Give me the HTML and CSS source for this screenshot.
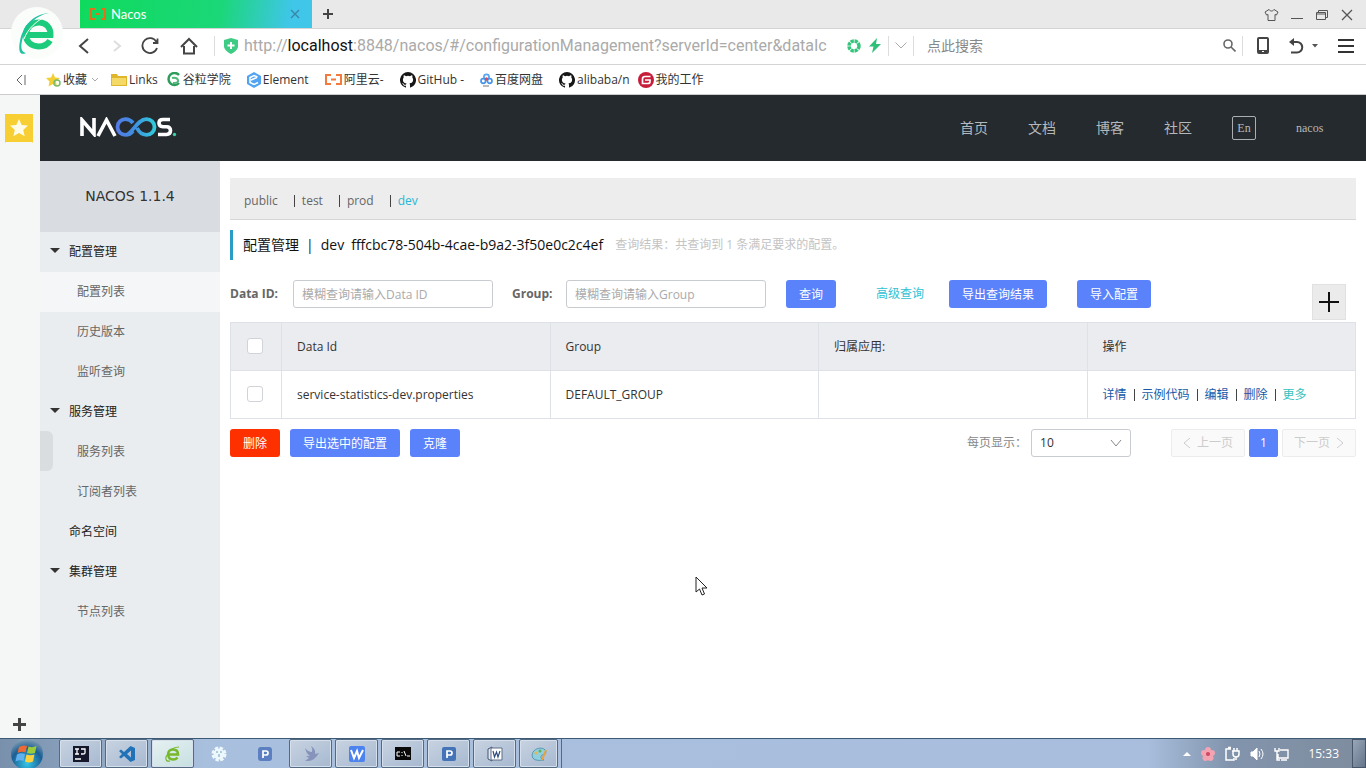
FILE: index.html
```html
<!DOCTYPE html>
<html lang="zh-CN">
<head>
<meta charset="utf-8">
<title>Nacos</title>
<link rel="stylesheet" href="styles.css">
</head>
<body>
<div class="tabbar">
  <div class="tab">
    <svg class="tab-icon" width="18" height="12" viewBox="0 0 18 12" fill="none" stroke="#e0701c" stroke-width="2"><path d="M6 1H2v10h4M12 1h4v10h-4M7 6h4"/></svg>
    <span class="tab-title">Nacos</span>
    <button class="plain" aria-label="关闭标签"><svg width="10" height="10" viewBox="0 0 10 10" stroke="#3a86a8" stroke-width="1.4"><path d="M1 1l8 8M9 1l-8 8"/></svg></button>
  </div>
  <button class="plain new-tab" aria-label="新标签"><svg width="12" height="12" viewBox="0 0 12 12" stroke="#444" stroke-width="2"><path d="M6 1v10M1 6h10"/></svg></button>
  <div class="window-tools">
    <svg width="15" height="14" viewBox="0 0 15 14" fill="none" stroke="#555"><path d="M5 1.500L1 4l1.500 3L4 6.500V12.500h7V6.500l1.500.5L14 4l-4-2.500C9 3.500 6 3.500 5 1.500z"/></svg>
    <svg width="13" height="14" viewBox="0 0 13 14" stroke="#555"><path d="M0 10.500h12"/></svg>
    <svg width="13" height="14" viewBox="0 0 13 14" fill="none" stroke="#555"><path d="M.5 4.500h9v7h-9zM.5 6h9M2.500 4.500v-2h9v7h-2"/></svg>
    <svg width="12" height="14" viewBox="0 0 12 14" stroke="#555" stroke-width="1.300"><path d="M1 2l10 10M11 2L1 12"/></svg>
  </div>
</div>
<div class="addressbar">
  <svg class="browser-logo" width="56" height="60" viewBox="0 0 56 60">
    <circle cx="27" cy="31" r="26" fill="#fbfdfb"/>
    <path d="M17 33H40.500C41 26 36 20.500 29.500 20.500C21 20.500 16 26 16 33C16 39.500 21 44.500 28.500 44.500C34 44.500 38 42 40 38.500" fill="none" stroke="#1ccb7c" stroke-width="6"/>
    <path d="M39 11C27 13 16 23 13 35C10 45 11 50 16 51C10 54 8 49 10 39C13 24 23 12 39 11z" fill="#20c0a0"/>
    <path d="M36 14C27 19 18 26 14 37" stroke="#fff" fill="none"/>
  </svg>
  <div class="nav-tools">
    <svg width="12" height="18" viewBox="0 0 12 18" fill="none" stroke="#444" stroke-width="2"><path d="M10 2L2 9l8 7"/></svg>
    <svg width="12" height="18" viewBox="0 0 12 18" fill="none" stroke="#ddd" stroke-width="2"><path d="M3 4l6 5-6 5"/></svg>
    <svg width="18" height="18" viewBox="0 0 18 18" fill="none" stroke="#444" stroke-width="1.800"><path d="M15.500 5A7.500 7.500 0 1 0 16 11M16.500 1.500V6H12"/></svg>
    <svg width="18" height="18" viewBox="0 0 18 18" fill="none" stroke="#444" stroke-width="2"><path d="M1 10l8-8 8 8M4 9v7.500h10V9"/></svg>
  </div>
  <i class="rule"></i>
  <svg class="shield" width="14" height="16" viewBox="0 0 14 16"><path d="M0 2L7 0l7 2v7q-1 4-7 7Q1 13 0 9z" fill="#3ecb84"/><path d="M7 4v7M3.500 7.500h7" stroke="#fff" stroke-width="2"/></svg>
  <div class="url">http://<b>localhost</b>:8848/nacos/#/configurationManagement?serverId=center&amp;dataIc</div>
  <svg class="aperture" width="14" height="14" viewBox="0 0 14 14" fill="none" stroke="#36c47c"><circle cx="7" cy="7" r="5" stroke-width="3.500" stroke-dasharray="3.200 .72"/></svg>
  <svg class="bolt" width="12" height="15" viewBox="0 0 12 15"><path d="M8 0L0 8.500h4.500L3 15l9-9H7z" fill="#2fbf78"/></svg>
  <i class="rule"></i>
  <svg class="drop" width="12" height="7" viewBox="0 0 12 7" fill="none" stroke="#aaa"><path d="M.5.500L6 6l5.500-5.500"/></svg>
  <i class="rule"></i>
  <input class="search" type="text" placeholder="点此搜索" aria-label="点此搜索">
  <svg width="13" height="13" viewBox="0 0 13 13" fill="none" stroke="#666" stroke-width="1.600"><circle cx="5" cy="5" r="4"/><path d="M8 8l4.500 4.500"/></svg>
  <i class="rule rule-search"></i>
  <div class="right-tools">
    <svg width="12" height="17" viewBox="0 0 12 17"><rect x="1" y="1" width="10" height="15" rx="1" fill="none" stroke="#444" stroke-width="2"/><path d="M1 13h10v3H1z" fill="#444"/><path d="M5 14.500h2" stroke="#fff"/></svg>
    <svg width="15" height="16" viewBox="0 0 15 16"><path d="M3 4h5a5 5 0 0 1 0 10.500H2" fill="none" stroke="#444" stroke-width="2"/><path d="M0 4l5-4v8z" fill="#444"/></svg>
    <svg class="caret" width="6" height="4" viewBox="0 0 6 4"><path d="M0 0h6L3 3.500z" fill="#555"/></svg>
    <svg width="16" height="16" viewBox="0 0 16 16" stroke="#333" stroke-width="2"><path d="M0 2h16M0 8h16M0 14h16"/></svg>
  </div>
</div>
<nav class="bookmarks" aria-label="收藏">
  <svg class="collapse" width="10" height="12" viewBox="0 0 10 12" fill="none" stroke="#666"><path d="M6 1L1 6l5 5M9 1v10"/></svg>
  <a href="#"><svg width="15" height="14" viewBox="0 0 15 14"><path d="M7 0l2 4.500 5 .5-4 3.500 1 5-4-2.500L2.500 13.500l1-5L0 5l5-.5z" fill="#f2cf35"/><circle cx="11" cy="10" r="3" fill="none" stroke="#7aba6a" stroke-width="1.500"/></svg>收藏 <svg class="fold" width="8" height="5" viewBox="0 0 8 5" fill="none" stroke="#aaa"><path d="M1 1l3 3 3-3"/></svg></a>
  <a class="near" href="#"><svg width="16" height="14" viewBox="0 0 16 14"><path d="M0 1h6l1 2h9v10H0z" fill="#dfb62c"/><path d="M1 5h14v7H1z" fill="#f5d966"/></svg>Links</a>
  <a href="#"><svg width="15" height="15" viewBox="0 0 15 15" fill="none"><path d="M13 3A6 6 0 1 0 13 11" stroke="#2e9d5c" stroke-width="2.500"/><path d="M6 6q5-1 6 2t-5 3" stroke="#51b87a" stroke-width="2"/></svg>谷粒学院</a>
  <a href="#"><svg width="14" height="16" viewBox="0 0 14 16"><path d="M7 0l7 4v8l-7 4-7-4V4z" fill="#52a4f2"/><path d="M10.500 5L7 3.500l-4 2v5l4 2 4-2M4 8l6-2.500" fill="none" stroke="#fff" stroke-width="1.500"/></svg>Element</a>
  <a href="#"><svg width="17" height="11" viewBox="0 0 17 11" fill="none" stroke="#f27a3d" stroke-width="2"><path d="M6 1H1v9h5M11 1h5v9h-5M6 5.500h5"/></svg>阿里云-</a>
  <a href="#"><svg width="16" height="16" viewBox="0 0 16 16"><path fill="#171717" d="M8 0a8 8 0 0 0-2.530 15.590c.4.070.55-.17.55-.38v-1.490c-2.230.49-2.700-.94-2.700-.94-.36-.92-.89-1.170-.89-1.170-.73-.5.050-.49.050-.49.800.06 1.230.83 1.230.83.720 1.220 1.870.87 2.330.66.070-.52.280-.87.500-1.070-1.770-.2-3.640-.89-3.640-3.950 0-.87.310-1.590.83-2.150-.09-.2-.36-1.010.07-2.120 0 0 .67-.22 2.200.82a7.600 7.600 0 0 1 4 0c1.530-1.040 2.200-.82 2.200-.82.430 1.110.16 1.920.08 2.120.51.560.82 1.280.82 2.150 0 3.070-1.870 3.750-3.650 3.950.29.250.54.730.54 1.480v2.190c0 .21.150.46.550.38A8 8 0 0 0 8 0z"/></svg>GitHub -</a>
  <a href="#"><svg width="13" height="14" viewBox="0 0 13 14" fill="none" stroke-width="1.700"><circle cx="6.500" cy="4" r="2.600" stroke="#5aa7ee"/><circle cx="3.300" cy="8" r="2.300" stroke="#4595eb"/><circle cx="9.700" cy="8" r="2.300" stroke="#4595eb"/><circle cx="6.500" cy="6" r=".8" stroke="#e0485a"/><path d="M3 13h6" stroke="#777" stroke-width="1"/></svg>百度网盘</a>
  <a class="near" href="#"><svg width="16" height="16" viewBox="0 0 16 16"><path fill="#171717" d="M8 0a8 8 0 0 0-2.530 15.590c.4.070.55-.17.55-.38v-1.490c-2.230.49-2.700-.94-2.700-.94-.36-.92-.89-1.170-.89-1.170-.73-.5.050-.49.050-.49.800.06 1.230.83 1.230.83.720 1.220 1.870.87 2.330.66.070-.52.280-.87.500-1.070-1.770-.2-3.640-.89-3.640-3.950 0-.87.310-1.590.83-2.150-.09-.2-.36-1.010.07-2.120 0 0 .67-.22 2.200.82a7.600 7.600 0 0 1 4 0c1.530-1.040 2.200-.82 2.200-.82.430 1.110.16 1.920.08 2.120.51.560.82 1.280.82 2.150 0 3.070-1.870 3.750-3.650 3.950.29.250.54.730.54 1.480v2.190c0 .21.150.46.550.38A8 8 0 0 0 8 0z"/></svg>alibaba/n</a>
  <a href="#"><svg width="16" height="16" viewBox="0 0 16 16"><circle cx="8" cy="8" r="8" fill="#c71d3a"/><path d="M12.500 4.500H7Q4.500 4.500 4.500 7v4.500h5.500q2 0 2-2V8H7" fill="none" stroke="#fff" stroke-width="1.700"/></svg>我的工作</a>
</nav>
<div class="workspace">
  <aside class="rail">
    <button class="plain" aria-label="收藏夹"><svg width="28" height="29" viewBox="0 0 28 29"><path d="M0 0h28v29l-1-1H1l-1 1z" fill="#f7cf32"/><path d="M14 5l2.700 6 6.300.6-4.800 4.300 1.500 6.300L14 19l-5.700 3.200 1.500-6.300L5 11.600l6.300-.6z" fill="#fffbe6"/></svg></button>
    <button class="plain rail-add" aria-label="添加"><svg width="13" height="13" viewBox="0 0 13 13" stroke="#444" stroke-width="3"><path d="M6.500 0v13M0 6.500h13"/></svg></button>
    <i class="handle"></i>
  </aside>
  <div class="app">
    <header class="topbar">
      <svg class="brand" width="97" height="20" viewBox="0 0 97 20" fill="none" role="img" aria-label="Nacos">
        <defs><linearGradient id="loop" gradientUnits="userSpaceOnUse" x1="36" y1="0" x2="76" y2="0"><stop stop-color="#5579e8"/><stop offset=".45" stop-color="#3f8fe0"/><stop offset="1" stop-color="#2fd0dc"/></linearGradient></defs>
        <path d="M2 19V3L14 17V1M18 19L26.500 3L35 19" stroke="#fff" stroke-width="3.600"/>
        <path d="M53 6Q50 2.200 45.500 2.200C41 2.200 37.500 5.500 37.500 10S41 17.800 45.500 17.800C52 17.800 57 2.200 66.500 2.200C71 2.200 74.500 5.500 74.500 10S71 17.800 66.500 17.800Q60 17.500 57 11M53 14Q50 17.800 45.500 17.800" stroke="url(#loop)" stroke-width="3.800"/>
        <path d="M90 2.500H83Q79 2.500 79 6T83 9.800h3.500q4 0 4 3.800T86.500 17.500H78" stroke="#fff" stroke-width="3.600"/>
        <circle cx="94.500" cy="17.500" r="1.700" fill="#3cd1a7"/>
      </svg>
      <nav class="topnav"><a href="#">首页</a><a href="#">文档</a><a href="#">博客</a><a href="#">社区</a><button class="lang">En</button><a class="user" href="#">nacos</a></nav>
    </header>
    <div class="body">
      <aside class="sidebar">
        <h1>NACOS 1.1.4</h1>
        <a class="group" href="#">配置管理</a>
        <a class="item active" href="#">配置列表</a>
        <a class="item" href="#">历史版本</a>
        <a class="item" href="#">监听查询</a>
        <a class="group" href="#">服务管理</a>
        <a class="item" href="#">服务列表</a>
        <a class="item" href="#">订阅者列表</a>
        <a class="group leaf" href="#">命名空间</a>
        <a class="group" href="#">集群管理</a>
        <a class="item" href="#">节点列表</a>
      </aside>
      <main class="main">
        <div class="spaces"><a href="#">public</a><a href="#">test</a><a href="#">prod</a><a class="current" href="#">dev</a></div>
        <h2 class="title"><span>配置管理</span><span>|</span><span>dev</span><span>fffcbc78-504b-4cae-b9a2-3f50e0c2c4ef</span><small>查询结果：共查询到 1 条满足要求的配置。</small></h2>
        <form class="query">
          <label for="dataid">Data ID:</label>
          <input id="dataid" type="text" placeholder="模糊查询请输入Data ID">
          <label class="label-group" for="group">Group:</label>
          <input id="group" type="text" placeholder="模糊查询请输入Group">
          <button class="btn search-btn" type="button">查询</button>
          <a class="advanced" href="#">高级查询</a>
          <button class="btn export-btn" type="button">导出查询结果</button>
          <button class="btn import-btn" type="button">导入配置</button>
          <button class="create" type="button" aria-label="新建配置"><svg width="20" height="20" viewBox="0 0 20 20" stroke="#111" stroke-width="2"><path d="M10 0v20M0 10h20"/></svg></button>
        </form>
        <table class="grid">
          <thead><tr><th class="check"><input type="checkbox" aria-label="全选"></th><th>Data Id</th><th>Group</th><th>归属应用:</th><th>操作</th></tr></thead>
          <tbody><tr><td class="check"><input type="checkbox" aria-label="选择 service-statistics-dev.properties"></td><td>service-statistics-dev.properties</td><td>DEFAULT_GROUP</td><td></td><td><div class="actions"><a href="#">详情</a><i></i><a href="#">示例代码</a><i></i><a href="#">编辑</a><i></i><a href="#">删除</a><i></i><a class="more" href="#">更多</a></div></td></tr></tbody>
        </table>
        <div class="footer">
          <button class="btn danger">删除</button><button class="btn">导出选中的配置</button><button class="btn">克隆</button>
          <label class="size-label" for="size">每页显示：</label>
          <div class="select"><select id="size"><option>10</option></select><svg width="12" height="8" viewBox="0 0 12 8" fill="none" stroke="#888"><path d="M1 1l5 6 5-6"/></svg></div>
          <div class="pager">
            <button class="page" disabled><svg width="8" height="10" viewBox="0 0 8 10" fill="none" stroke="#ccc"><path d="M7 0L1 5l6 5"/></svg>上一页</button>
            <button class="page on">1</button>
            <button class="page" disabled>下一页<svg width="8" height="10" viewBox="0 0 8 10" fill="none" stroke="#ccc"><path d="M1 0l6 5-6 5"/></svg></button>
          </div>
        </div>
      </main>
    </div>
  </div>
</div>
<footer class="taskbar">
  <button class="plain start" aria-label="开始"><svg width="36" height="30" viewBox="0 0 36 30">
    <defs><radialGradient id="orb" cx=".5" cy=".8" r=".8"><stop stop-color="#36c5e8"/><stop offset=".6" stop-color="#1b5f94"/><stop offset="1" stop-color="#8fa5b8"/></radialGradient></defs>
    <circle cx="18" cy="15" r="16" fill="url(#orb)"/><path d="M10 8q4-2.500 8-1l-1.500 6.500q-4-1.500-8 .5z" fill="#ee6a35"/><path d="M19.500 7.500q4 1.500 8-.5L26 14q-4 1.500-8 0z" fill="#9ccc3c"/><path d="M8 15.500q4-2 8-.5L14.500 22q-4-1.500-8 .5z" fill="#62b1ef"/><path d="M17.500 15.500q4 1.500 8 0L24 22.500q-4 2-8 0z" fill="#fbd13f"/></svg></button>
  <button class="task" aria-label="IntelliJ IDEA"><svg width="16" height="16" viewBox="0 0 16 16"><path d="M0 0h16v16H0z" fill="#15182b"/><path d="M2 3h4M4 3v5M2 8h4M8 3h4v4q0 1-2 1H8M2 13h6" stroke="#fff" fill="none" stroke-width="1.300"/></svg></button>
  <button class="task" aria-label="VS Code"><svg width="16" height="16" viewBox="0 0 16 16"><path d="M11.500 0L16 2v12l-4.500 2L5 10l-3 2.500L0 11l3-3-3-3 2-1.500L5 6zM12 4.500L8 8l4 3.500z" fill="#2272b8" fill-rule="evenodd"/></svg></button>
  <button class="task lit" aria-label="浏览器"><svg width="18" height="18" viewBox="0 0 18 18" fill="none" stroke="#76b82a"><path d="M4.500 9.500h9.500q0-5-5-5T4.200 9.500 9 14.500q3 0 4.500-2" stroke-width="2.500"/><path d="M15 2Q6 2 2 12q-1 5 4 4" stroke-width="1.200"/></svg></button>
  <button class="task bare" aria-label="设置"><svg width="16" height="16" viewBox="0 0 16 16"><circle cx="8" cy="8" r="5.500" fill="#edf8fd" stroke="#edf8fd" stroke-width="4" stroke-dasharray="3 1.300"/><path d="M5 6h2M9 6h2M8 8v3" stroke="#6ea0b8"/></svg></button>
  <button class="task bare" aria-label="P"><svg width="14" height="14" viewBox="0 0 14 14"><rect width="14" height="14" rx="3" fill="#5b7fc0"/><path d="M5 11V4h3q2 0 2 2T8 8H5" fill="none" stroke="#fff" stroke-width="1.700"/></svg></button>
  <button class="task" aria-label="飞鸟"><svg width="16" height="16" viewBox="0 0 16 16"><path d="M2 2Q5 6 9 6Q10 3 8 0Q13 3 12 8L16 7Q12 14 6 15H2L6 12L3 10H7Q3 7 2 2z" fill="#8793bb"/></svg></button>
  <button class="task" aria-label="WPS"><svg width="16" height="16" viewBox="0 0 16 16"><rect width="16" height="16" rx="2" fill="#4d83ee"/><path d="M2 4l3 8 3-7 2 7 4-8" fill="none" stroke="#fff" stroke-width="2"/></svg></button>
  <button class="task" aria-label="命令行"><svg width="16" height="13" viewBox="0 0 16 13"><path d="M0 0h16v13H0z" fill="#090909"/><path d="M5 5H2v4h3M7 5v1M7 8v1M9 4l2 5M12 9h3" fill="none" stroke="#fff"/></svg></button>
  <button class="task" aria-label="P"><svg width="14" height="14" viewBox="0 0 14 14"><rect width="14" height="14" rx="2" fill="#4474b7"/><path d="M5 11V4h3q2 0 2 2T8 8H5" fill="none" stroke="#fff" stroke-width="1.700"/></svg></button>
  <button class="task" aria-label="文档"><svg width="16" height="16" viewBox="0 0 16 16"><path d="M1 3l4-2v14l-4-2z" fill="#dfe8f2" stroke="#45556c"/><path d="M4 2h11v12H4z" fill="#fff" stroke="#5d6e86"/><path d="M6 5l1.500 6L9.500 6l1.500 5 2-6" fill="none" stroke="#2f4a7c" stroke-width="1.200"/></svg></button>
  <button class="task" aria-label="画图"><svg width="16" height="16" viewBox="0 0 16 16"><path d="M1 9C2 1 14 0 15 6q0 3-4 3-3 3 2 5Q1 16 1 9z" fill="#8fd0df" stroke="#5999b6"/><circle cx="5" cy="7" r="1.500" fill="#e5b84b"/><circle cx="9" cy="5" r="1.500" fill="#67ae58"/><path d="M11 14l4-10" stroke="#e7a13e" stroke-width="2"/></svg></button>
  <i class="task-end"></i>
  <div class="tray">
    <svg width="8" height="5" viewBox="0 0 8 5"><path d="M0 5l4-4 4 4z" fill="#fff"/></svg>
    <svg width="14" height="14" viewBox="0 0 14 14" fill="#f3a3b1"><circle cx="7" cy="3" r="3"/><circle cx="3" cy="6" r="3"/><circle cx="11" cy="6" r="3"/><circle cx="4.500" cy="11" r="3"/><circle cx="9.500" cy="11" r="3"/><circle cx="7" cy="7" r="2" fill="#d3465f"/></svg>
    <svg width="15" height="16" viewBox="0 0 15 16" fill="none" stroke="#fff" stroke-width="1.500"><path d="M9 12v2H1V3h5M3 1.500h3"/><path d="M7 5h7v3q0 3-3 3t-3-3V5M9 2v3M12 2v3M11 11v3"/></svg>
    <svg width="14" height="14" viewBox="0 0 14 14" fill="none" stroke="#fff"><path d="M1 5h2l4-4v12L3 9H1z" fill="#fff"/><path d="M9 4q2 3 0 6M11 2q4 5 0 10"/></svg>
    <svg width="15" height="14" viewBox="0 0 15 14" fill="none" stroke="#fff" stroke-width="1.400"><path d="M6 3h8v8H4V7M7 13h6M1 1v3h4V1M3 4v9h3"/></svg>
    <time>15:33</time>
  </div>
  <i class="desktop"></i>
</footer>
<svg class="cursor" width="13" height="20" viewBox="0 0 13 20"><path d="M1 1v15l3.500-3 2.500 6 2.500-1L7 12h5z" fill="#fff" stroke="#222"/></svg>
</body>
</html>
```
FILE: styles.css
```css
* { box-sizing: border-box; }
body {
  margin: 0;
  height: 100vh;
  display: flex;
  flex-direction: column;
  overflow: hidden;
  background: #fff;
  color: #333;
  font: 12px/16px "Open Sans", "Noto Sans CJK SC", sans-serif;
}
a { color: inherit; text-decoration: none; }
button, input, select { font: inherit; }
svg { flex: none; display: block; }
.plain { display: flex; padding: 0; border: 0; background: none; }

.tabbar { display: flex; align-items: center; height: 29px; flex: none; padding-left: 80px; background: #e9e9e9; border-bottom: 1px solid #d4d4d4; }
.tab { display: flex; align-items: center; width: 232px; height: 28px; padding: 0 12px 0 9px; gap: 4px; color: #fff; background: linear-gradient(100deg, #0fda5d 0%, #1bd778 60%, #3fc6e8 90%); }
.tab-title { flex: 1; font: 13px/20px Lato, sans-serif; }
.new-tab { margin-left: 10px; }
.window-tools { display: flex; gap: 12px; margin-left: auto; padding: 2px 13px 0 0; }

.addressbar { position: relative; display: flex; align-items: center; height: 36px; flex: none; padding: 0 12px 2px 78px; border-bottom: 1px solid #d4d4d4; }
.browser-logo { position: absolute; left: 10px; top: -27px; }
.nav-tools { display: flex; gap: 21px; width: 136px; }
.nav-tools svg:nth-child(3) { margin-left: -3px; }
.rule { width: 1px; height: 20px; background: #ddd; }
.shield { margin: 0 6px 0 9px; }
.url { flex: none; font: 16px/20px Roboto, sans-serif; color: #aaa; width: 597px; white-space: nowrap; }
.url b { font-weight: 400; color: #111; }
.aperture { margin: 0 8px 0 6px; }
.bolt { margin-right: 7px; }
.drop { margin: 0 6px; }
.search { flex: 1; min-width: 0; border: 0; outline: 0; padding: 0 13px; font-size: 14px; }
.search::placeholder { color: #888; }
.rule-search { margin: 0 14px 0 6px; }
.right-tools { display: flex; align-items: center; gap: 20px; }
.right-tools .caret { margin-left: -12px; }

.bookmarks { display: flex; align-items: center; gap: 16px; height: 30px; flex: none; padding: 0 16px; border-bottom: 1px solid #ccc; font-size: 12px; }
.bookmarks a { display: flex; align-items: center; gap: 2px; white-space: nowrap; }
.bookmarks .fold { margin-left: 2px; margin-right: -4px; }
.bookmarks .near { margin-right: -8px; }
.collapse { margin-right: 4px; }

.workspace { display: flex; flex: 1; min-height: 0; }
.rail { position: relative; display: flex; flex-direction: column; align-items: center; justify-content: space-between; width: 40px; padding: 19px 2px 7px 0; background: #f5f7f6; }
.handle { position: absolute; left: 40px; top: 336px; width: 13px; height: 40px; border-radius: 0 6px 6px 0; background: #dadddf; }
.app { display: flex; flex-direction: column; flex: 1; min-width: 0; }
.topbar { display: flex; align-items: center; justify-content: space-between; height: 66px; flex: none; padding: 0 40px; background: #252a2e; }
.brand { margin-bottom: 3px; }
.topnav { display: flex; align-items: center; gap: 40px; font-size: 14px; color: #b5b9bb; }
.lang { width: 24px; height: 24px; padding: 0; border: 1px solid #aaaeb0; border-radius: 2px; background: none; color: #b5b9bb; font: 12px/22px "Liberation Serif", serif; }
.user { min-width: 30px; font: 12px/20px "Liberation Serif", serif; }

.body { display: flex; flex: 1; min-height: 0; }
.sidebar { width: 180px; background: #eaedef; }
.sidebar h1 { margin: 0; height: 71px; background: #d9dde1; color: #333; text-align: center; font: 14px/70px "DejaVu Sans", sans-serif; }
.sidebar a { display: block; line-height: 40px; }
.group { position: relative; padding-left: 29px; color: #222; }
.group::before { content: ""; position: absolute; left: 10px; top: 16px; border: 5px solid transparent; border-top-color: #333; border-bottom: 0; }
.leaf::before { display: none; }
.item { padding-left: 37px; color: #666; }
.active { background: #f4f6f8; }

.main { flex: 1; min-width: 0; padding: 17px 10px; }
.spaces { display: flex; height: 42px; align-items: center; padding: 4px 14px 0; background: #ededed; border-bottom: 1px solid #d6d6d6; color: #666; }
.spaces a + a { margin-left: 16px; padding-left: 7px; border-left: 1px solid #444; line-height: 12px; }
.spaces .current { color: #27b7d4; }
.title { display: flex; align-items: center; gap: 7px; height: 30px; margin: 10px 0 20px; padding-left: 10px; border-left: 3px solid #2a9cc5; font-size: 14px; font-weight: 400; color: #111; white-space: nowrap; }
.title small { margin-left: 5px; font-size: 12px; color: #c4c4c4; }
.query { display: flex; align-items: center; margin-bottom: 14px; height: 28px; }
.query label { width: 63px; font-weight: 700; color: #666; white-space: nowrap; }
.query .label-group { width: 54px; margin-left: 19px; }
.query input { width: 200px; height: 28px; padding: 0 8px; border: 1px solid #c8cbd0; border-radius: 3px; }
.query input::placeholder { color: #aaa; }
.btn { height: 28px; padding: 1px 13px 0; border: 0; border-radius: 3px; background: #5a82fb; color: #fff; white-space: nowrap; }
.search-btn { margin: 0 40px 0 20px; }
.export-btn { margin: 0 30px 0 25px; }
.advanced { color: #2fc1d3; white-space: nowrap; }
.create { align-self: flex-start; display: flex; align-items: center; justify-content: center; width: 34px; height: 36px; margin: 4px 10px 0 auto; padding: 0; border: 1px solid #e1e1e1; background: #ebebeb; }

.grid { width: 100%; table-layout: fixed; border-collapse: collapse; color: #333; }
.grid th, .grid td { height: 48px; padding: 0 15px; border: 1px solid #dfe1e8; text-align: left; font-weight: 400; white-space: nowrap; }
.grid th { background: #ebecf0; }
.grid .check { width: 51px; padding: 0 16px; }
.grid input { appearance: none; display: block; width: 16px; height: 16px; margin: 0 0 2px; border: 1px solid #d0d3d8; border-radius: 3px; background: #fff; }
.actions { display: flex; align-items: center; gap: 7px; color: #1659a8; }
.actions i { width: 1px; height: 12px; background: #444; }
.actions .more { color: #36c1bd; }

.footer { display: flex; align-items: center; gap: 10px; margin-top: 10px; }
.danger { background: #ff3000; }
.size-label { margin-left: auto; margin-right: -6px; color: #888; }
.select { position: relative; width: 100px; }
.select select { appearance: none; width: 100%; height: 28px; padding: 0 8px; border: 1px solid #c8cbd0; border-radius: 3px; background: #fff; color: #333; }
.select svg { position: absolute; right: 9px; top: 10px; }
.pager { display: flex; gap: 4px; margin-left: 30px; }
.page { display: flex; align-items: center; gap: 6px; height: 28px; padding: 0 11px; border: 1px solid #ececec; border-radius: 2px; background: #fafafa; color: #ccc; white-space: nowrap; }
.page.on { padding: 0 10px; border-color: #5a82fb; background: #5a82fb; color: #fff; }

.taskbar { display: flex; height: 30px; flex: none; border-top: 1px solid #3c5a74; background: linear-gradient(90deg, #7990ac 0, #a8bfdd 15%, #a8bedc 84%, #8294ad 90%, #7e8c9d 100%); }
.start { width: 58px; padding-left: 9px; overflow: hidden; margin-right: 1px; }
.task { display: flex; align-items: center; justify-content: center; width: 43px; margin-right: 3px; padding: 0; border: 1px solid #536a82; border-radius: 2px; box-shadow: inset 0 0 0 1px #d5e0ec; background: linear-gradient(150deg, #c8d3e1, #a6b8d0); }
.lit { background: linear-gradient(150deg, #e7f1f3, #c6dfe0); }
.bare { border-color: transparent; background: none; box-shadow: none; }
.task:nth-of-type(n+12) { margin-right: 0; width: 39px; }
.task-end { border-left: 1px solid #536a82; margin-left: 3px; }
.tray { display: flex; align-items: center; gap: 10px; margin-left: auto; color: #fff; }
.tray time { margin-left: 9px; }
.desktop { width: 14px; margin-left: 13px; border: 1px solid #46566b; background: linear-gradient(120deg, #98a6b8, #66758a); }
.cursor { position: absolute; left: 695px; top: 576px; }
```
